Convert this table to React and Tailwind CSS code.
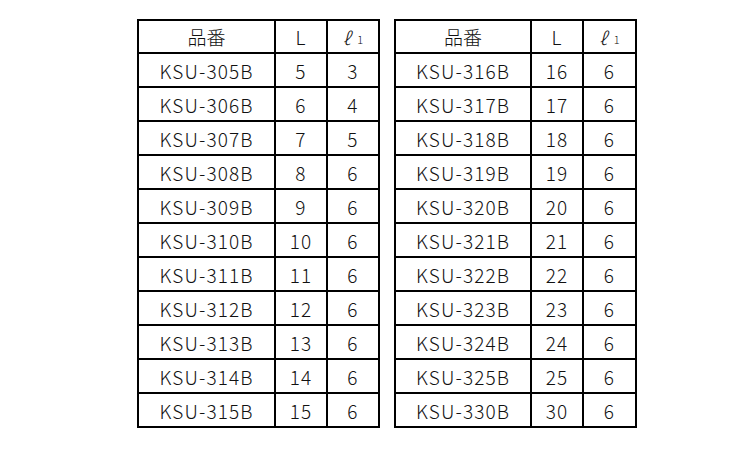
import React from "react";

const left = [
  ["KSU-305B", "5", "3"],
  ["KSU-306B", "6", "4"],
  ["KSU-307B", "7", "5"],
  ["KSU-308B", "8", "6"],
  ["KSU-309B", "9", "6"],
  ["KSU-310B", "10", "6"],
  ["KSU-311B", "11", "6"],
  ["KSU-312B", "12", "6"],
  ["KSU-313B", "13", "6"],
  ["KSU-314B", "14", "6"],
  ["KSU-315B", "15", "6"],
];
const right = [
  ["KSU-316B", "16", "6"],
  ["KSU-317B", "17", "6"],
  ["KSU-318B", "18", "6"],
  ["KSU-319B", "19", "6"],
  ["KSU-320B", "20", "6"],
  ["KSU-321B", "21", "6"],
  ["KSU-322B", "22", "6"],
  ["KSU-323B", "23", "6"],
  ["KSU-324B", "24", "6"],
  ["KSU-325B", "25", "6"],
  ["KSU-330B", "30", "6"],
];

function Cell({ children, className = "" }) {
  return (
    <div className={"bg-white flex items-center justify-center " + className}>
      {children}
    </div>
  );
}

function Table({ rows, cols }) {
  return (
    <div
      className={
        "grid bg-black p-[2px] gap-[2px] grid-rows-[31px_repeat(11,32px)] " + cols
      }
    >
      <Cell className="text-[19px] tracking-normal">品番</Cell>
      <Cell className="text-[19px]">L</Cell>
      <Cell className="text-[18px] tracking-normal">
        <span className="italic">ℓ</span>
        <span className="text-[11px] ml-[7px] mt-[6px]">1</span>
      </Cell>
      {rows.map((r) => (
        <React.Fragment key={r[0]}>
          <Cell>{r[0]}</Cell>
          <Cell>{r[1]}</Cell>
          <Cell>{r[2]}</Cell>
        </React.Fragment>
      ))}
    </div>
  );
}

export default function App() {
  return (
    <div
      className="w-[750px] h-[450px] bg-white text-[#111] text-[19px] leading-none font-light tracking-[1.1px]"
      style={{ fontFamily: '"Noto Sans CJK JP", "Noto Sans", sans-serif' }}
    >
      <div className="flex pt-[19px] pl-[137px] gap-[14px]">
        <Table rows={left} cols="grid-cols-[135px_50px_50px]" />
        <Table rows={right} cols="grid-cols-[134px_50px_51px]" />
      </div>
    </div>
  );
}
